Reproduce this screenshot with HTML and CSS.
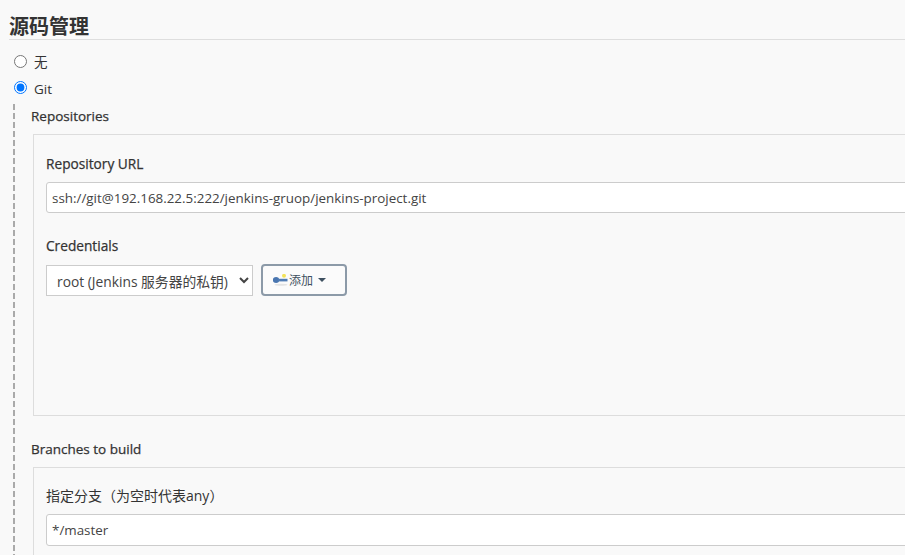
FILE: index.html
```html
<!DOCTYPE html>
<html lang="zh">
<head>
<meta charset="utf-8">
<title>源码管理</title>
<link rel="stylesheet" href="styles.css">
</head>
<body>
<main class="page">
  <h2 class="section-title">源码管理</h2>
  <label class="radio-row"><input type="radio" name="scm" class="radio"><span>无</span></label>
  <label class="radio-row radio-row-git"><input type="radio" name="scm" class="radio" checked><span>Git</span></label>
  <div class="git-block">
    <div class="block-label">Repositories</div>
    <div class="repeat-box repo-box">
      <div class="field-label">Repository URL</div>
      <input class="text-input" type="text" value="ssh://git@192.168.22.5:222/jenkins-gruop/jenkins-project.git">
      <div class="field-label cred-label">Credentials</div>
      <div class="cred-row">
        <select class="cred-select"><option>root (Jenkins 服务器的私钥)</option></select>
        <button class="add-btn" type="button">
          <svg class="key-icon" width="16" height="12" viewBox="0 0 16 12" aria-hidden="true">
            <ellipse cx="8" cy="10.8" rx="6.5" ry="1" fill="#e4e4e4"/>
            <circle cx="11" cy="1.8" r="2" fill="#f3e35a"/>
            <ellipse cx="3" cy="6" rx="3.2" ry="3" fill="#4a76b0"/>
            <rect x="5" y="4.8" width="9.5" height="2.6" fill="#4f7cb5"/>
          </svg><span>添加</span><span class="caret"></span>
        </button>
      </div>
    </div>
    <div class="block-label branches-label">Branches to build</div>
    <div class="repeat-box branch-box">
      <div class="field-label cjk-label">指定分支（为空时代表any）</div>
      <input class="text-input branch-input" type="text" value="*/master">
    </div>
  </div>
</main>
</body>
</html>
```
FILE: styles.css
```css
html, body {
  margin: 0;
  height: 555px;
  overflow: hidden;
  background: #f9f9f9;
}
body {
  font-family: "Open Sans", "Noto Sans CJK SC", sans-serif;
  font-size: 13.5px;
  color: #333;
}
.page {
  width: 1200px;
  padding-left: 9px;
}
.section-title {
  margin: 0;
  height: 39px;
  font-family: "Noto Sans CJK SC", sans-serif;
  font-size: 20px;
  font-weight: 700;
  line-height: 51px;
  border-bottom: 1px solid #dedede;
  color: #333;
}
.radio-row {
  display: flex;
  align-items: center;
  height: 26px;
  margin-top: 8px;
  padding-left: 5px;
}
.radio-row span { margin-left: 7px; }
.radio-row-git { margin-top: 0; }
.radio-row-git span { padding-top: 3px; }
.radio {
  margin: 0;
  width: 13px;
  height: 13px;
}
.git-block {
  margin-left: 4px;
  margin-top: 4px;
  padding-left: 18px;
  background-image: repeating-linear-gradient(to bottom, #aaa 0, #aaa 6px, transparent 6px, transparent 9px);
  background-size: 2px 100%;
  background-repeat: no-repeat;
}
.block-label {
  font-size: 13.5px;
  line-height: 18px;
  padding-top: 3px;
  -webkit-text-stroke: 0.25px #333;
}
.repeat-box {
  margin-top: 9px;
  margin-left: 2px;
  border: 1px solid #ddd;
  padding: 20px 0 0 12px;
}
.repo-box { height: 260px; }
.branches-label { margin-top: 21px; }
.branch-box { height: 100px; padding-top: 19px; }
.field-label {
  font-size: 13.7px;
  line-height: 18px;
  -webkit-text-stroke: 0.25px #333;
}
.cjk-label {
  font-size: 14px;
  -webkit-text-stroke: 0;
}
.text-input {
  display: block;
  box-sizing: border-box;
  width: 1100px;
  height: 31px;
  margin-top: 9px;
  padding: 0 5px;
  border: 1px solid #ccc;
  border-radius: 3px;
  background: #fff;
  font-family: inherit;
  font-size: 13.4px;
  color: #444;
}
.branch-input { height: 32px; }
.cred-label { margin-top: 24px; }
.cred-row {
  display: flex;
  align-items: center;
  gap: 8px;
  margin-top: 9px;
}
.cred-select {
  box-sizing: border-box;
  width: 207px;
  height: 31px;
  padding: 3px 0 0 6px;
  border: 1px solid #ccc;
  border-radius: 0;
  background-color: #fff;
  font-family: inherit;
  font-size: 13.8px;
  color: #444;
}
.add-btn {
  display: flex;
  align-items: center;
  box-sizing: border-box;
  width: 86px;
  height: 32px;
  padding: 0 0 0 10px;
  border: 2px solid #8c9aa8;
  border-radius: 4px;
  background: #fbfbfb;
  font-family: inherit;
  font-size: 12px;
  color: #3e5060;
}
.caret {
  width: 0;
  height: 0;
  margin-left: 5px;
  border-left: 4px solid transparent;
  border-right: 4px solid transparent;
  border-top: 4px solid #3e5060;
}
```
